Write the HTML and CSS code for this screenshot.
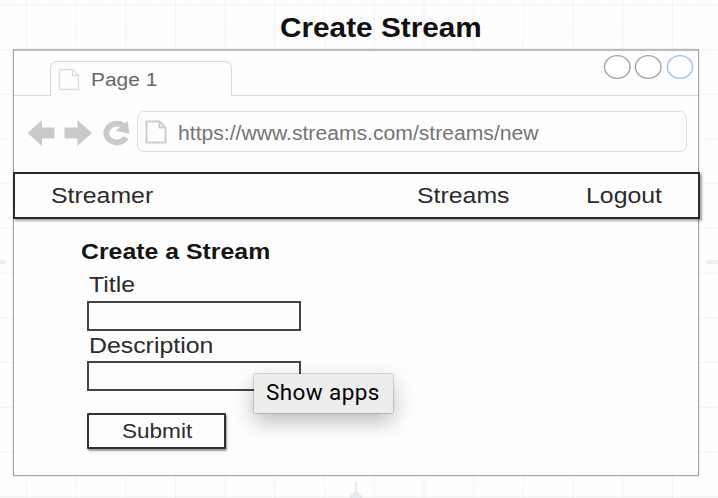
FILE: index.html
```html
<!DOCTYPE html>
<html lang="en">
<head>
<meta charset="utf-8">
<title>Create Stream</title>
<link rel="stylesheet" href="styles.css">
</head>
<body>
<main class="canvas">
  <h1 class="caption"><span class="wide">Create Stream</span></h1>
  <section class="window">
    <div class="tabs">
      <div class="tab-lead"></div>
      <div class="tab">
        <svg class="page-icon" width="22" height="23" viewBox="0 0 22 23"><path d="M1.5 1.5H14.5L20.5 7.5V21.5H1.5ZM14.5 1.5V7.5H20.5"/></svg>
        <span class="wide">Page 1</span>
      </div>
      <div class="tab-rest">
        <svg class="dots" width="92" height="26" viewBox="0 0 92 26">
          <ellipse cx="14.3" cy="13" rx="12.8" ry="11.4"/>
          <ellipse cx="45.2" cy="13" rx="12.8" ry="11.4"/>
          <ellipse class="dot-blue" cx="77" cy="13" rx="12.6" ry="11.4"/>
        </svg>
      </div>
    </div>
    <div class="toolbar">
      <svg class="nav-icons" width="106" height="30" viewBox="0 0 106 30">
        <path class="arrow" d="M0.500 15L15 2V9.500H27.500V20.500H15V28Z"/>
        <path class="arrow" d="M65 15L50.500 2V9.500H37.500V20.500H50.500V28Z"/>
        <path class="reload" d="M99 19.500A10.500 9.300 0 1 1 96 7.500"/>
        <path class="arrow" d="M100.500 3L102.500 15.500L88.500 13Z"/>
      </svg>
      <div class="address">
        <svg class="page-icon strong" width="22" height="24" viewBox="0 0 22 24"><path d="M1.500 1.500H14.500L20.500 7.500V22.500H1.500ZM14.500 1.500V7.500H20.500"/></svg>
        <span class="wide">https://www.streams.com/streams/new</span>
      </div>
    </div>
    <nav class="navbar">
      <span class="wide brand">Streamer</span>
      <span class="wide link-streams">Streams</span>
      <span class="wide">Logout</span>
    </nav>
    <form class="form">
      <h2 class="heading"><span class="wide">Create a Stream</span></h2>
      <label class="label" for="title"><span class="wide">Title</span></label>
      <input class="field" id="title">
      <label class="label second" for="description"><span class="wide">Description</span></label>
      <input class="field" id="description">
      <button class="submit" type="button"><span class="wide">Submit</span></button>
    </form>
  </section>
  <div class="tooltip"><span class="tip-text">Show apps</span></div>
  <svg class="mark mark-bottom" width="14" height="16" viewBox="0 0 14 16"><path d="M6 0H8V9L13 14V16H1V14L6 9Z"/></svg>
  <i class="mark mark-left"></i>
  <i class="mark mark-right"></i>
</main>
</body>
</html>
```
FILE: styles.css
```css
* { box-sizing: border-box; }

body {
  margin: 0;
  font-family: "Liberation Sans", Arial, sans-serif;
  color: #2b2b2b;
}

.canvas {
  position: relative;
  width: 718px;
  height: 498px;
  padding-left: 13px;
  overflow: hidden;
  background-color: #fefefe;
  background-image:
    linear-gradient(90deg, #f4f4f4 1px, transparent 1px),
    linear-gradient(#f4f4f4 1px, transparent 1px),
    linear-gradient(90deg, #fafafa 1px, transparent 1px),
    linear-gradient(#fafafa 1px, transparent 1px);
  background-size: 49.7px 100%, 100% 44.7px, 12.43px 100%, 100% 11.18px;
  background-position: 26px 0, 0 4.500px, 26px 0, 0 4.500px;
}

.wide {
  display: inline-block;
  white-space: nowrap;
  transform: scaleX(1.09);
  transform-origin: 0 50%;
}

.caption {
  height: 49px;
  margin: 0;
  padding: 12px 0 0 266.500px;
  font-size: 27.300px;
  line-height: 32px;
  color: #111;
}

.window {
  width: 686px;
  height: 427px;
  border: 1px solid #a0a0a0;
  border-top: 2px solid #bbb;
  background: #fefefe;
  box-shadow: 0 0 1px #aaa;
}

.tabs {
  display: flex;
  height: 45px;
}

.tab-lead {
  width: 36px;
  border-bottom: 1.500px solid #dadada;
}

.tab {
  display: flex;
  width: 182px;
  height: 35px;
  margin-top: 10px;
  padding: 6px 0 0 7px;
  border: 1.500px solid #dadada;
  border-bottom: 0;
  border-radius: 7px 7px 0 0;
  font-size: 19.200px;
  line-height: 24px;
  color: #666;
}

.tab .wide { margin-left: 11px; }

.tab-rest {
  flex: 1;
  padding-top: 3px;
  border-bottom: 1px solid #dadada;
  text-align: right;
}

.dots {
  margin-right: 3px;
  fill: #fff;
  stroke: #a2a2a2;
  stroke-width: 1.400;
}

.dot-blue { stroke: #a3bff0; }

.page-icon {
  flex: none;
  fill: none;
  stroke: #ddd;
  stroke-width: 1.400;
}

.page-icon.strong {
  stroke: #cbcbcb;
  stroke-width: 1.800;
}

.toolbar {
  display: flex;
  height: 76px;
  padding: 15px 0 0 13px;
}

.nav-icons {
  flex: none;
  margin-top: 7px;
}

.arrow { fill: #cacaca; }

.reload {
  fill: none;
  stroke: #cacaca;
  stroke-width: 5.800;
}

.address {
  display: flex;
  width: 550px;
  height: 41px;
  margin-left: 4px;
  padding: 8px 0 0 7px;
  border: 1.500px solid #dedede;
  border-radius: 7px;
  font-size: 19.400px;
  line-height: 27px;
  color: #747474;
}

.address .wide { margin-left: 11px; }

.navbar {
  display: flex;
  width: 687px;
  height: 47px;
  margin-left: -1px;
  padding: 8px 0 0 36px;
  border: 2px solid #2a2a2a;
  background: #fefefe;
  box-shadow: 1.500px 2px 2px rgba(0, 0, 0, .35);
  font-size: 22.800px;
  line-height: 27px;
}

.navbar .wide { margin-left: -0.500px; }
.brand { width: 366.500px; }
.link-streams { width: 169.500px; }

.form {
  display: flex;
  flex-direction: column;
  align-items: flex-start;
  padding: 18px 0 0 73px;
}

.heading {
  margin: 0 0 0 -6px;
  font-size: 22.800px;
  line-height: 28px;
  color: #151515;
}

.label {
  height: 36px;
  padding: 6px 0 0 2px;
  font-size: 22.800px;
  line-height: 26px;
}

.label.second {
  height: 30px;
  padding-top: 1px;
}

.field {
  width: 214px;
  height: 30px;
  padding: 0 4px;
  border: 2px solid #444;
  border-radius: 0;
  background: #fefefe;
}

.submit {
  width: 139px;
  height: 36px;
  margin-top: 22px;
  padding: 0 0 0 33px;
  border: 2px solid #333;
  border-radius: 1px;
  background: #fefefe;
  box-shadow: 1px 2px 2px rgba(0, 0, 0, .4);
  font: 20.700px/32px "Liberation Sans", Arial, sans-serif;
  color: #2b2b2b;
  text-align: left;
}

.tooltip {
  position: absolute;
  left: 254px;
  top: 374px;
  width: 139px;
  height: 38.500px;
  padding-left: 12px;
  background: #ededed;
  box-shadow: 0 0 1px rgba(0, 0, 0, .8), 0 8px 22px rgba(0, 0, 0, .28);
  font: 22.500px/36px Roboto, sans-serif;
  letter-spacing: 0.400px;
  color: #000;
  white-space: nowrap;
}

.mark { position: absolute; }

.mark-bottom {
  left: 349px;
  top: 482px;
  fill: #e3ebf3;
}

.mark-left,
.mark-right {
  top: 260px;
  width: 11px;
  height: 4px;
  background: #e8f1f4;
}

.mark-left { left: -6px; }
.mark-right { left: 707px; }
```
